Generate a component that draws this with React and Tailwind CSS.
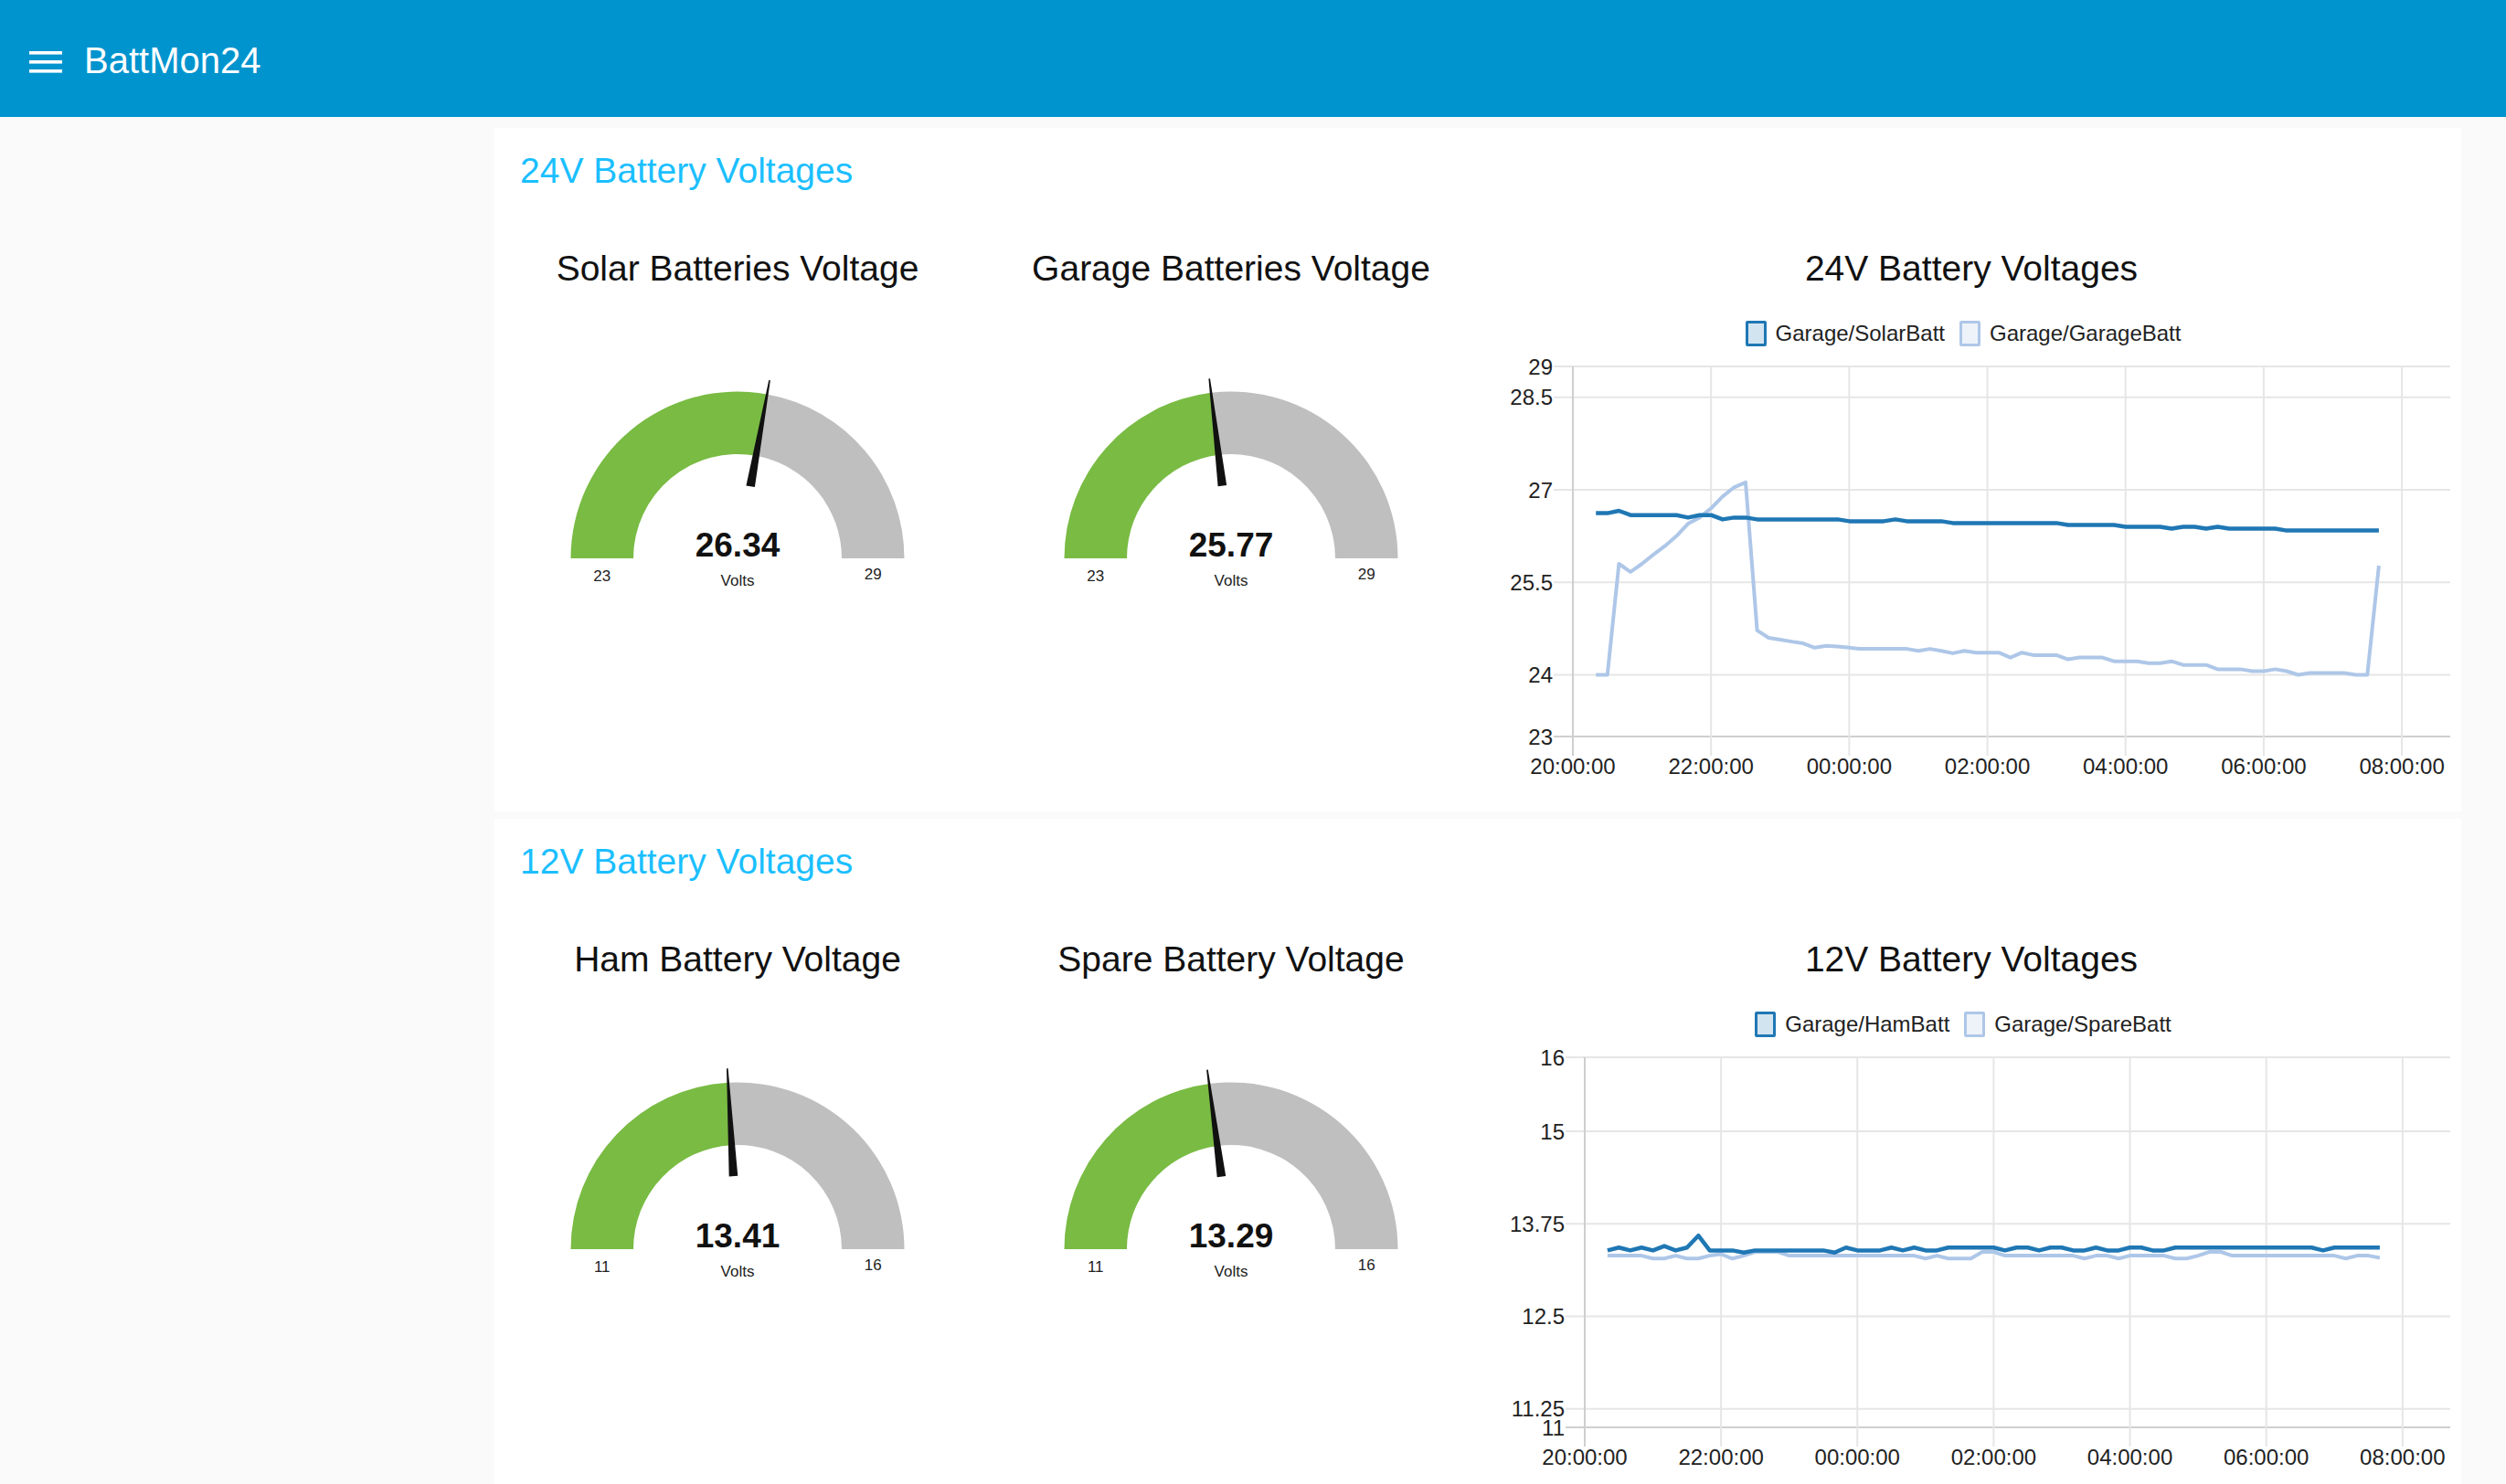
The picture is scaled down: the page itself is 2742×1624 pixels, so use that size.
import React from 'react';

const expand = (runs) => runs.flatMap(([v, n]) => Array(n).fill(v));

// readings every 10 minutes from 20:20 to 07:40
const solar24 = expand([
  [26.62, 2], [26.66, 1], [26.59, 5], [26.55, 1], [26.59, 2], [26.52, 1], [26.55, 2], [26.52, 8],
  [26.49, 4], [26.52, 1], [26.49, 4], [26.46, 10], [26.43, 5], [26.4, 4], [26.37, 1], [26.4, 2],
  [26.37, 1], [26.4, 1], [26.37, 5], [26.34, 9],
]);

const garage24 = [
  24.0, 24.0, 25.8, 25.67, 25.8, 25.95, 26.09, 26.25, 26.45, 26.55,
  26.7, 26.89, 27.04, 27.12, 24.72, 24.6, 24.57, 24.54, 24.51, 24.44,
  24.47, 24.46, 24.44, 24.42, 24.42, 24.42, 24.42, 24.42, 24.39, 24.42,
  24.39, 24.35, 24.39, 24.36, 24.36, 24.36, 24.28, 24.36, 24.32, 24.32,
  24.32, 24.25, 24.28, 24.28, 24.28, 24.22, 24.22, 24.22, 24.19, 24.19,
  24.22, 24.16, 24.16, 24.16, 24.09, 24.09, 24.09, 24.06, 24.06, 24.09,
  24.06, 24.0, 24.03, 24.03, 24.03, 24.03, 24.0, 24.0, 25.77,
];

const ham12 = [
  13.39, 13.43, 13.39, 13.43, 13.39, 13.45, 13.39, 13.43, 13.59, 13.39,
  13.39, 13.39, 13.36, 13.39, 13.39, 13.39, 13.39, 13.39, 13.39, 13.39,
  13.36, 13.43, 13.39, 13.39, 13.39, 13.43, 13.39, 13.43, 13.39, 13.39,
  13.43, 13.43, 13.43, 13.43, 13.43, 13.39, 13.43, 13.43, 13.39, 13.43,
  13.43, 13.39, 13.39, 13.43, 13.39, 13.39, 13.43, 13.43, 13.39, 13.39,
  13.43, 13.43, 13.43, 13.43, 13.43, 13.43, 13.43, 13.43, 13.43, 13.43,
  13.43, 13.43, 13.43, 13.39, 13.43, 13.43, 13.43, 13.43, 13.43,
];

const spare12 = [
  13.32, 13.32, 13.32, 13.32, 13.28, 13.28, 13.32, 13.28, 13.28, 13.32,
  13.34, 13.28, 13.32, 13.37, 13.37, 13.37, 13.32, 13.32, 13.32, 13.32,
  13.32, 13.32, 13.32, 13.32, 13.32, 13.32, 13.32, 13.32, 13.28, 13.32,
  13.28, 13.28, 13.28, 13.37, 13.37, 13.32, 13.32, 13.32, 13.32, 13.32,
  13.32, 13.32, 13.28, 13.32, 13.32, 13.28, 13.32, 13.32, 13.32, 13.32,
  13.28, 13.28, 13.32, 13.37, 13.37, 13.32, 13.32, 13.32, 13.32, 13.32,
  13.32, 13.32, 13.32, 13.32, 13.32, 13.28, 13.32, 13.32, 13.29,
];

const TIME_LABELS = ['20:00:00', '22:00:00', '00:00:00', '02:00:00', '04:00:00', '06:00:00', '08:00:00'];

function Gauge({ title, value, min, max }) {
  const cx = 266, cy = 293, R = 182.5, r = 114;
  const f = Math.min(1, Math.max(0, (value - min) / (max - min)));
  const th = Math.PI * (1 - f);
  const at = (rad) => [cx + rad * Math.cos(th), cy - rad * Math.sin(th)];
  const [ox, oy] = at(R);
  const [ix, iy] = at(r);
  const green = `M${cx - R} ${cy} A${R} ${R} 0 0 1 ${ox} ${oy} L${ix} ${iy} A${r} ${r} 0 0 0 ${cx - r} ${cy} Z`;
  const grey = `M${ox} ${oy} A${R} ${R} 0 0 1 ${cx + R} ${cy} L${cx + r} ${cy} A${r} ${r} 0 0 0 ${ix} ${iy} Z`;

  // needle, thick at the base and thin at the tip
  const dx = Math.cos(th), dy = -Math.sin(th);
  const px = Math.sin(th), py = Math.cos(th);
  const b = 80, t = 198;
  const needle = [
    [cx + b * dx + 4.8 * px, cy + b * dy + 4.8 * py],
    [cx + t * dx + 0.8 * px, cy + t * dy + 0.8 * py],
    [cx + t * dx - 0.8 * px, cy + t * dy - 0.8 * py],
    [cx + b * dx - 4.8 * px, cy + b * dy - 4.8 * py],
  ].map((p) => p.join(',')).join(' ');

  return (
    <div className="flex flex-col items-center pt-[42px]">
      <div className="text-[39px] leading-[48px] text-[#111]">{title}</div>
      <svg width="532" height="570" viewBox="0 0 532 570">
        <path d={green} fill="#79bb43" />
        <path d={grey} fill="#bfbfbf" />
        <polygon points={needle} fill="#111" />
        <text x={cx} y="291" textAnchor="middle" fontSize="37" fontWeight="700" fill="#111">
          {value.toFixed(2)}
        </text>
        <text x={cx} y="323" textAnchor="middle" fontSize="17" fill="#222">Volts</text>
        <text x={cx - (R + r) / 2} y="318" textAnchor="middle" fontSize="17" fill="#222">{min}</text>
        <text x={cx + (R + r) / 2} y="316" textAnchor="middle" fontSize="17" fill="#222">{max}</text>
      </svg>
    </div>
  );
}

function LegendItem({ label, dark }) {
  return (
    <div className="flex items-center">
      <span
        className={
          dark
            ? 'h-[28px] w-[23px] rounded-[2px] border-[3px] border-[#1f77b4] bg-[#d2e4f0]'
            : 'h-[28px] w-[23px] rounded-[2px] border-[3px] border-[#aec7e8] bg-[#eef3fa]'
        }
      />
      <span className="ml-[10px] text-[24px] leading-[30px] text-[#222]">{label}</span>
    </div>
  );
}

function LineChart({ title, legend, ticks, yMin, yMax, plotL, series }) {
  const plotR = 1060, plotT = 21, plotB = 426, span = 12.7;
  const xs = (h) => plotL + (h / span) * (plotR - plotL);
  const ys = (v) => plotB - ((v - yMin) / (yMax - yMin)) * (plotB - plotT);
  const line = (vals) =>
    vals.map((v, i) => `${i ? 'L' : 'M'}${xs(1 / 3 + i / 6).toFixed(1)} ${ys(v).toFixed(1)}`).join(' ');

  return (
    <div className="col-span-2 flex flex-col items-center pt-[42px]">
      <div className="text-[39px] leading-[48px] text-[#111]">{title}</div>
      <div className="mt-[32px] flex gap-[16px] pr-[18px]">
        <LegendItem label={legend[0]} dark />
        <LegendItem label={legend[1]} />
      </div>
      <svg width="1072" height="508" viewBox="0 0 1072 508">
        {ticks.map((v, i) => (
          <g key={v}>
            <line
              x1={plotL - 21}
              x2={plotR}
              y1={ys(v)}
              y2={ys(v)}
              stroke={i === ticks.length - 1 ? '#cfcfcf' : '#e6e6e6'}
              strokeWidth="2"
            />
            <text x={plotL - 22} y={ys(v) + 8.5} textAnchor="end" fontSize="24" fill="#222">{v}</text>
          </g>
        ))}
        {TIME_LABELS.map((label, i) => (
          <g key={label}>
            <line
              x1={xs(i * 2)}
              x2={xs(i * 2)}
              y1={plotT}
              y2={plotB + 21}
              stroke={i === 0 ? '#cfcfcf' : '#e6e6e6'}
              strokeWidth="2"
            />
            <text x={xs(i * 2)} y={plotB + 41} textAnchor="middle" fontSize="24" fill="#222">{label}</text>
          </g>
        ))}
        <path d={line(series[1])} fill="none" stroke="#aec7e8" strokeWidth="4" strokeLinejoin="round" />
        <path d={line(series[0])} fill="none" stroke="#1f77b4" strokeWidth="4.5" strokeLinejoin="round" />
      </svg>
    </div>
  );
}

function Group({ title, children }) {
  return (
    <section className="w-[2152px] bg-white">
      <h2 className="h-[88px] pl-[28px] pt-[23px] text-[39px] leading-[48px] text-[#1bbfff]">{title}</h2>
      <div className="grid grid-cols-[repeat(4,532px)] gap-x-[8px]">{children}</div>
    </section>
  );
}

export default function App() {
  return (
    <div className="min-h-screen bg-[#fafafa] [font-family:'Liberation_Sans',Arial,sans-serif]">
      <header className="flex h-[128px] items-center bg-[#0094ce] pl-[32px]">
        <svg className="mt-[8px]" width="36" height="24" viewBox="0 0 36 24" fill="#fff">
          <rect x="0" y="0" width="36" height="3.6" />
          <rect x="0" y="10" width="36" height="3.6" />
          <rect x="0" y="20" width="36" height="3.6" />
        </svg>
        <h1 className="ml-[24px] mt-[3px] text-[40px] leading-[48px] text-white">BattMon24</h1>
      </header>

      <main className="flex flex-col gap-[8px] pl-[541px] pt-[12px]">
        <Group title="24V Battery Voltages">
          <Gauge title="Solar Batteries Voltage" value={26.34} min={23} max={29} />
          <Gauge title="Garage Batteries Voltage" value={25.77} min={23} max={29} />
          <LineChart
            title="24V Battery Voltages"
            legend={['Garage/SolarBatt', 'Garage/GarageBatt']}
            ticks={[29, 28.5, 27, 25.5, 24, 23]}
            yMin={23}
            yMax={29}
            plotL={100}
            series={[solar24, garage24]}
          />
        </Group>

        <Group title="12V Battery Voltages">
          <Gauge title="Ham Battery Voltage" value={13.41} min={11} max={16} />
          <Gauge title="Spare Battery Voltage" value={13.29} min={11} max={16} />
          <LineChart
            title="12V Battery Voltages"
            legend={['Garage/HamBatt', 'Garage/SpareBatt']}
            ticks={[16, 15, 13.75, 12.5, 11.25, 11]}
            yMin={11}
            yMax={16}
            plotL={113}
            series={[ham12, spare12]}
          />
        </Group>
      </main>
    </div>
  );
}
